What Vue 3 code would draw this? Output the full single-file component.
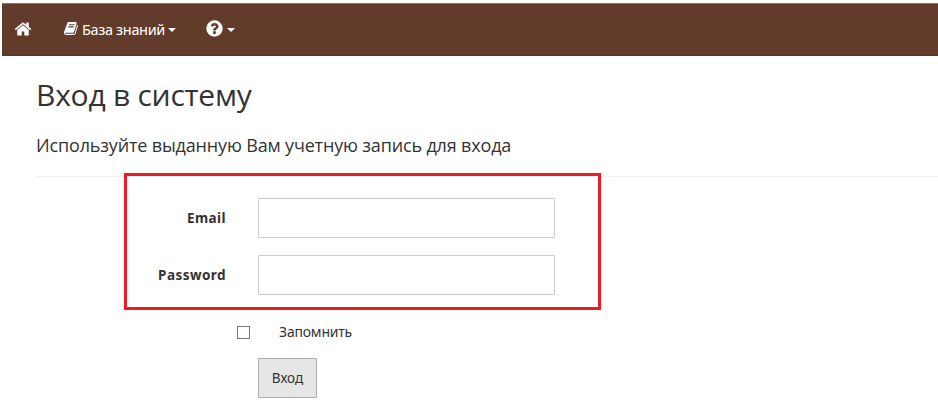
<script setup>
const homePath = "M1472 992v480q0 26-19 45t-45 19h-384v-384h-256v384h-384q-26 0-45-19t-19-45v-480q0-1 .5-3t.5-3l575-474 575 474q1 2 1 6zm223-69l-62 74q-8 9-21 11h-3q-13 0-21-7l-692-577-692 577q-12 8-24 7-13-2-21-11l-62-74q-8-10-7-23.500t11-21.500l719-599q32-26 76-26t76 26l244 204v-195q0-14 9-23t23-9h192q14 0 23 9t9 23v408l219 182q10 8 11 21.500t-7 23.500z"
const bookPath = "M1639 478q40 57 18 129l-275 906q-19 64-76.500 107.500t-122.500 43.500h-923q-77 0-148.500-53.500t-99.500-131.500q-24-67-2-127 0-4 3-27t4-37q1-8-3-21.500t-3-19.500q2-11 8-21t16.500-23.500 16.500-23.500q23-38 45-91.500t30-91.500q3-10 .5-30t-.5-28q3-11 17-28t17-23q21-36 42-92t25-90q1-9-2.500-32t.5-28q4-13 22-30.500t22-22.500q19-26 42.500-84.500t27.500-96.500q1-8-3-25.500t-2-26.500q2-8 9-18t18-23 17-21q8-12 16.500-30.500t15-35 16-36 19.500-32 26.500-23.500 36-11.500 47.500 5.500l-1 3q38-9 51-9h761q74 0 114 56t18 130l-274 906q-36 119-71.500 153.500t-128.500 34.500h-869q-27 0-38 15-11 16-1 43 24 70 144 70h923q29 0 56-15.500t35-41.500l300-987q7-22 5-57 38 15 59 43zm-1064 2q-4 13 2 22.500t20 9.500h608q13 0 25.500-9.500t16.500-22.500l21-64q4-13-2-22.500t-20-9.500h-608q-13 0-25.500 9.500t-16.500 22.500zm-83 256q-4 13 2 22.500t20 9.500h608q13 0 25.500-9.500t16.500-22.500l21-64q4-13-2-22.500t-20-9.500h-608q-13 0-25.500 9.500t-16.500 22.500z"
const helpPath = "M1024 1376v-192q0-14-9-23t-23-9h-192q-14 0-23 9t-9 23v192q0 14 9 23t23 9h192q14 0 23-9t9-23zm256-672q0-88-55.500-163t-138.500-116-170-41q-243 0-371 213-15 24 8 42l132 100q7 6 19 6 16 0 25-12 53-68 86-92 34-24 86-24 48 0 85.500 26t37.500 59q0 38-20 61t-68 45q-63 28-115.500 86.500t-52.500 125.500v36q0 14 9 23t23 9h192q14 0 23-9t9-23q0-19 21.500-49.500t54.500-49.500q32-18 49-28.500t46-35 44.500-48 28-60.500 12.500-81zm384 192q0 209-103 385.500t-279.500 279.500-385.500 103-385.500-103-279.500-279.500-103-385.500 103-385.500 279.500-279.500 385.500-103 385.500 103 279.500 279.500 103 385.500z"
</script>

<template>
  <div class="page">
    <nav class="nav">
      <a class="nav-item home">
        <svg class="icon-home" viewBox="0 0 1792 1792"><path :d="homePath" /></svg>
      </a>
      <a class="nav-item kb">
        <svg class="icon-book" viewBox="0 0 1792 1792"><path :d="bookPath" /></svg>
        <span>База знаний</span>
        <i class="caret"></i>
      </a>
      <a class="nav-item help">
        <svg class="icon-help" viewBox="0 0 1792 1792"><path :d="helpPath" /></svg>
        <i class="caret"></i>
      </a>
    </nav>

    <main class="content">
      <h2 class="title">Вход в систему</h2>
      <h4 class="subtitle">Используйте выданную Вам учетную запись для входа</h4>
      <hr class="rule" />

      <form class="form" @submit.prevent>
        <div class="row">
          <label class="label">Email</label>
          <input class="input" type="text" />
        </div>
        <div class="row">
          <label class="label">Password</label>
          <input class="input" type="password" />
        </div>
        <div class="remember">
          <span class="check"></span>
          <span class="remember-text">Запомнить</span>
        </div>
        <button class="submit" type="button">Вход</button>
      </form>
    </main>

    <div class="highlight"></div>
  </div>
</template>

<style scoped>
.page {
  position: relative;
  width: 938px;
  height: 406px;
  overflow: hidden;
  background: #fff;
  box-sizing: border-box;
  padding: 3px 0 0 2px;
  color: #333;
  font-family: "DejaVu Sans", sans-serif;
}
.nav {
  display: flex;
  align-items: center;
  height: 53px;
  padding-bottom: 2px;
  background: #623b2a;
  border-top: 1px solid #8f7566;
  border-bottom: 1px solid #573424;
  box-sizing: border-box;
  color: #fff;
}
.nav-item {
  display: flex;
  align-items: center;
}
.home { margin-left: 12px; }
.icon-home { width: 18px; height: 18px; fill: #fff; }
.kb { margin-left: 32px; font-family: "Noto Sans", sans-serif; font-size: 14.5px; letter-spacing: -0.35px; }
.icon-book { width: 15px; height: 15px; fill: #fff; margin-right: 3px; }
.help { margin-left: 29px; }
.icon-help { width: 19px; height: 19px; fill: #fff; }
.caret {
  width: 0;
  height: 0;
  margin-left: 3px;
  margin-top: 2px;
  border-top: 4px solid #fff;
  border-left: 4px solid transparent;
  border-right: 4px solid transparent;
}
.content {
  padding: 0 0 0 34px;
}
.title {
  margin: 19px 0 0;
  font-size: 30px;
  line-height: 40px;
  font-weight: 400;
  font-family: "Open Sans", sans-serif;
  letter-spacing: -0.25px;
}
.subtitle {
  margin: 18px 0 0;
  font-size: 18px;
  line-height: 24px;
  font-weight: 400;
  font-family: "Open Sans", sans-serif;
  letter-spacing: -0.16px;
}
.rule {
  margin: 19px 0 0;
  border: 0;
  border-top: 1px solid #eee;
}
.form {
  display: flex;
  flex-direction: column;
  margin-left: -2px;
  padding-top: 21px;
}
.row {
  display: flex;
  align-items: center;
  margin-bottom: 17px;
}
.label {
  width: 192px;
  text-align: right;
  font-family: "Noto Sans", sans-serif;
  font-weight: 700;
  font-size: 13.5px;
  letter-spacing: 0.45px;
}
.input {
  width: 297px;
  height: 40px;
  margin-left: 32px;
  box-sizing: border-box;
  border: 1px solid #ccc;
  border-radius: 1px;
  background: #fff;
  outline: none;
}
.remember {
  display: flex;
  align-items: center;
  height: 14px;
  margin-left: 203px;
  margin-top: 13px;
}
.check {
  width: 13px;
  height: 13px;
  box-sizing: border-box;
  border: 1px solid #767676;
  background: #fff;
}
.remember-text {
  margin-left: 29px;
  margin-bottom: 2px;
  font-family: "Noto Sans", sans-serif;
  font-size: 14px;
  letter-spacing: -0.2px;
}
.submit {
  align-self: flex-start;
  width: 59px;
  height: 40px;
  margin-top: 19px;
  margin-left: 224px;
  padding: 0;
  background: #e6e6e6;
  border: 1px solid #adadad;
  border-radius: 1px;
  color: #333;
  font-family: "Noto Sans", sans-serif;
  font-size: 13.5px;
}
.highlight {
  position: absolute;
  left: 124px;
  top: 173px;
  width: 477px;
  height: 137px;
  box-sizing: border-box;
  border: 3px solid #ed1c24;
  pointer-events: none;
}
</style>
